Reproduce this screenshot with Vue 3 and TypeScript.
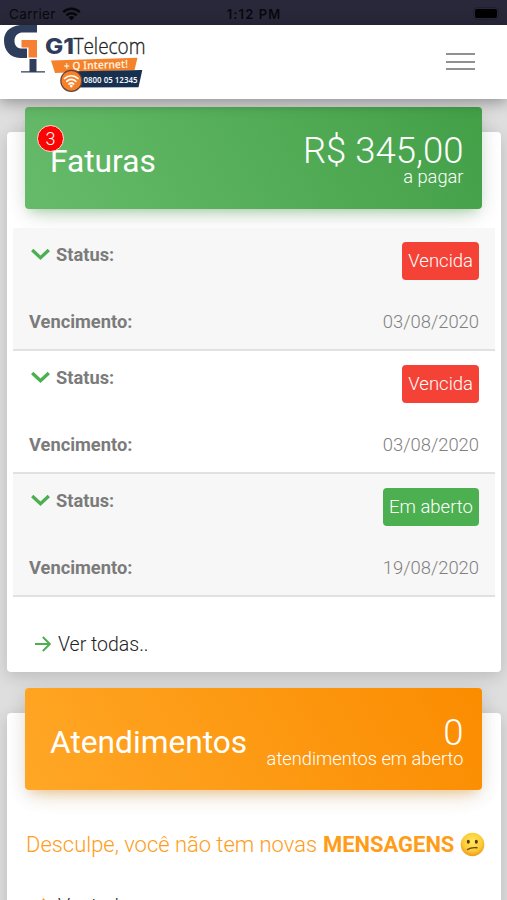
<script setup lang="ts">
interface Invoice {
  id: number
  label: string
  tone: 'danger' | 'success'
  due: string
}

const invoices: Invoice[] = [
  { id: 1, label: 'Vencida', tone: 'danger', due: '03/08/2020' },
  { id: 2, label: 'Vencida', tone: 'danger', due: '03/08/2020' },
  { id: 3, label: 'Em aberto', tone: 'success', due: '19/08/2020' },
]
</script>

<template>
  <div class="screen">
    <div class="statusbar">
      <div class="carrier">
        <span>Carrier</span>
        <svg width="19" height="14" viewBox="0 0 19 14">
          <g fill="none" stroke="#08080c" stroke-width="2.5">
            <path d="M1.3 5.2a11.7 11.7 0 0 1 16.4 0" />
            <path d="M4.3 8.3a7.4 7.4 0 0 1 10.4 0" />
          </g>
          <path d="M6.5 10.3a4.4 4.4 0 0 1 6 0L9.5 13.5z" fill="#08080c" />
        </svg>
      </div>
      <div class="clock">1:12 PM</div>
      <div class="battery"><i></i></div>
    </div>

    <header class="topbar">
      <svg class="logo" width="150" height="73" viewBox="0 0 150 73">
        <path d="M37 0H20C9 1.500 4 7.500 4 15.500C4 25.500 10 32.500 20 33H27V23.500H21C16.500 23 14.500 20 14.500 16C14.500 11.500 17 8 22 7.500H37z" fill="#2e3d5c" />
        <path d="M21.500 15H37V32.500H28.500V22.500H21.500z" fill="#f47f35" />
        <path d="M29.500 34H36.500V46.300H45V47.500H21V46.300H29.500z" fill="#2e3d5c" />
        <text x="45" y="29.300" class="brand-bold" textLength="29" lengthAdjust="spacingAndGlyphs">G1</text>
        <text x="73.500" y="29.300" class="brand-thin" textLength="72" lengthAdjust="spacingAndGlyphs">Telecom</text>
        <path d="M51 35.500L137.500 32.700L134.500 45L55 48z" fill="#f5812a" />
        <text x="64" y="45" class="tag" textLength="64" lengthAdjust="spacingAndGlyphs" transform="rotate(-2 64 44)">+ Q Internet!</text>
        <path d="M66 46.500L142.300 45L138.500 62.300L66 62.500z" fill="#17304f" />
        <text x="83.500" y="57.700" class="phone" textLength="54" lengthAdjust="spacingAndGlyphs">0800 05 12345</text>
        <circle cx="71.300" cy="55.800" r="10.500" fill="#f5812a" stroke="#68433a" stroke-width="1.200" />
        <g fill="none" stroke="#fff" stroke-width="1.700" stroke-linecap="round">
          <path d="M64.600 53.500a9.500 9.500 0 0 1 13.400 0" />
          <path d="M66.800 56.300a6.400 6.400 0 0 1 9 0" />
          <path d="M69 59a3.400 3.400 0 0 1 4.600 0" />
        </g>
        <circle cx="71.300" cy="61" r="1.400" fill="#fff" />
      </svg>
      <button class="menu" aria-label="Menu"><i></i><i></i><i></i></button>
    </header>

    <main>
      <section class="card invoices">
        <div class="banner green">
          <h2><span class="count">3</span>Faturas</h2>
          <div class="total">
            <strong>R$ 345,00</strong>
            <small>a pagar</small>
          </div>
        </div>
        <div class="rows">
          <div v-for="item in invoices" :key="item.id" class="row">
            <div class="line">
              <span class="label">
                <svg width="20" height="14" viewBox="0 0 20 14">
                  <path d="M1.200 2L9.500 9.800L17.800 2" fill="none" stroke="#4caf50" stroke-width="3.300" />
                </svg>
                <b>Status:</b>
              </span>
              <span class="badge" :class="item.tone">{{ item.label }}</span>
            </div>
            <div class="line date-line">
              <b>Vencimento:</b>
              <span class="date">{{ item.due }}</span>
            </div>
          </div>
        </div>
        <a class="more">
          <svg width="16" height="16" viewBox="0 0 16 16">
            <path d="M0 8H14.500M7.800 1L14.800 8L7.800 15" fill="none" stroke="#4caf50" stroke-width="1.900" />
          </svg>
          <span>Ver todas..</span>
        </a>
      </section>

      <section class="card tickets">
        <div class="banner orange">
          <h2>Atendimentos</h2>
          <div class="total">
            <strong>0</strong>
            <small>atendimentos em aberto</small>
          </div>
        </div>
        <p class="empty">
          <span>Desculpe, você não tem novas</span>
          <b>MENSAGENS</b>
          <svg width="25" height="25" viewBox="0 0 25 25">
            <defs>
              <radialGradient id="face" cx="50%" cy="38%" r="62%">
                <stop offset="0" stop-color="#ffe95e" />
                <stop offset="0.650" stop-color="#fccb35" />
                <stop offset="1" stop-color="#e89a1b" />
              </radialGradient>
            </defs>
            <circle cx="12.500" cy="12.500" r="11.800" fill="url(#face)" />
            <ellipse cx="8.300" cy="9.800" rx="1.500" ry="2" fill="#5b3716" />
            <ellipse cx="16.300" cy="9.800" rx="1.500" ry="2" fill="#5b3716" />
            <path d="M7.500 17.500C10 15.800 13 15.300 17 15.700" fill="none" stroke="#6d4218" stroke-width="1.400" stroke-linecap="round" />
          </svg>
        </p>
        <a class="more">
          <svg width="16" height="16" viewBox="0 0 16 16">
            <path d="M0 8H14.500M7.800 1L14.800 8L7.800 15" fill="none" stroke="#ff9800" stroke-width="1.900" />
          </svg>
          <span>Ver todas..</span>
        </a>
      </section>
    </main>
  </div>
</template>

<style>
body { overflow: hidden; }
</style>

<style scoped>
* { box-sizing: border-box; }
.screen {
  width: 507px;
  height: 900px;
  overflow: hidden;
  background: #dedede;
  font-family: Roboto, sans-serif;
  font-weight: 300;
}
.statusbar {
  display: grid;
  grid-template-columns: 1fr auto 1fr;
  align-items: center;
  height: 25px;
  padding: 2px 8px 0 9px;
  background: #28283a;
  color: #08080c;
  font-family: Inter, sans-serif;
  font-size: 13px;
}
.carrier { display: flex; align-items: center; gap: 6px; font-weight: 400; font-size: 13.500px; letter-spacing: 0.350px; }
.clock { font-weight: 600; letter-spacing: 1.100px; }
.battery { justify-self: end; padding: 1px; border: 1px solid #20202e; border-radius: 4px; }
.battery i { display: block; width: 22px; height: 9px; border-radius: 2px; background: #000; }
.topbar {
  position: relative;
  display: flex;
  justify-content: space-between;
  align-items: center;
  height: 73.500px;
  padding-right: 32px;
  background: #fff;
  box-shadow: 0 3px 14px rgba(0, 0, 0, 0.360);
}
.logo { overflow: visible; }
.brand-bold { font: 800 21px Inter, sans-serif; fill: #2e3d5c; }
.brand-thin { font: 300 21.500px "Open Sans", sans-serif; fill: #222; stroke: #222; stroke-width: 0.300px; }
.tag { font: 600 11px "Noto Sans", sans-serif; fill: #fff0dc; }
.phone { font: 600 9px "Noto Sans", sans-serif; fill: #f3f5f8; }
.menu {
  display: flex;
  flex-direction: column;
  gap: 5.300px;
  padding: 0;
  border: 0;
  background: none;
}
.menu i { width: 29px; height: 2.200px; background: #919191; }
main { padding: 33.500px 6.500px 0 7px; }
.card {
  background: #fff;
  border-radius: 4px;
  box-shadow: 0 4px 16px rgba(0, 0, 0, 0.160);
}
.invoices { height: 539.500px; margin-bottom: 41.500px; padding-top: 1px; }
.tickets { height: 260px; padding-top: 1px; }
.banner {
  display: flex;
  justify-content: space-between;
  height: 102px;
  margin: -26.200px 18.500px 0 18px;
  padding: 0 18.500px 0 25px;
  border-radius: 4px;
  color: #fff;
}
.green {
  background: linear-gradient(60deg, #66bb6a, #43a047);
  box-shadow: 0 12px 20px -10px rgba(76, 175, 80, 0.280), 0 4px 20px rgba(0, 0, 0, 0.120), 0 7px 8px -5px rgba(76, 175, 80, 0.200);
}
.orange {
  background: linear-gradient(60deg, #ffa726, #fb8c00);
  box-shadow: 0 12px 20px -10px rgba(255, 152, 0, 0.280), 0 4px 20px rgba(0, 0, 0, 0.120), 0 7px 8px -5px rgba(255, 152, 0, 0.200);
}
h2 {
  position: relative;
  margin: 35px 0 0;
  font-size: 31.700px;
  line-height: 40px;
  font-weight: 400;
}
.count {
  position: absolute;
  left: -13px;
  top: -16.500px;
  width: 27px;
  height: 27px;
  border: 1.500px solid #ffe0d8;
  border-radius: 50%;
  background: #fb0404;
  font-size: 18px;
  line-height: 25px;
  font-weight: 300;
  text-align: center;
}
.total { display: flex; flex-direction: column; align-items: flex-end; padding-top: 23.500px; }
.orange .total { padding-top: 24.500px; }
.total strong { font-size: 36.500px; line-height: 36px; padding-top: 3px; font-weight: 300; }
.total small { margin-top: -3px; font-size: 18.300px; line-height: 22px; }
.rows { margin: 18.700px 5.500px 0 6px; }
.row {
  height: 123.300px;
  padding: 14px 16px 0;
  border-bottom: 2px solid #e1e1e1;
}
.row:nth-child(odd) { background: #f7f7f7; }
.line { display: flex; justify-content: space-between; align-items: flex-start; }
.label { display: flex; align-items: center; gap: 5px; padding-left: 2px; height: 26px; }
.line b { color: #7b7b7b; font-size: 18.300px; font-weight: 700; line-height: 24px; }
.badge {
  height: 38px;
  padding: 0 6px;
  border-radius: 4px;
  color: #fff;
  font-size: 18.500px;
  line-height: 38.500px;
}
.danger { background: #f44336; }
.success { background: #4caf50; }
.date-line { margin-top: 30px; }
.date { color: #808080; font-size: 18.400px; line-height: 24px; }
.more {
  display: flex;
  align-items: center;
  gap: 7px;
  margin: 35px 0 0 28px;
  height: 24px;
  color: #222;
  font-size: 19.500px;
}
.empty {
  display: flex;
  align-items: center;
  gap: 6px;
  height: 30px;
  margin: 39.700px 0 0 19px;
  color: #ff9c18;
  font-size: 21.950px;
  white-space: nowrap;
}
.empty b { font-weight: 700; }
.tickets .more { margin-top: 34.500px; }
</style>
